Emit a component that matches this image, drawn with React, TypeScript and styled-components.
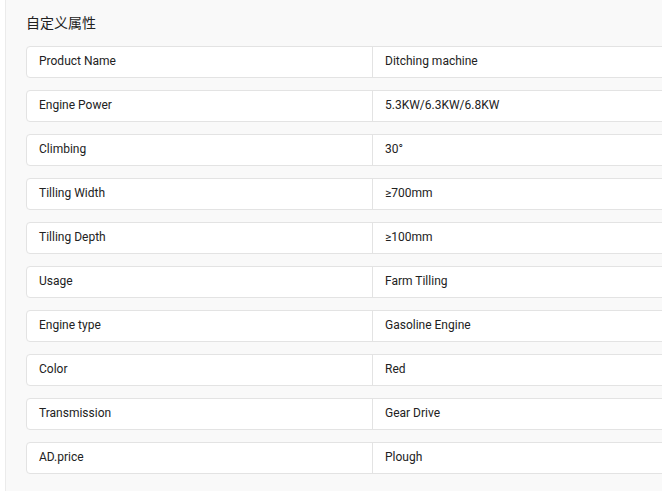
import React from "react";
import styled, { createGlobalStyle } from "styled-components";

const Global = createGlobalStyle`
  html, body { margin: 0; padding: 0; overflow: hidden; background: #fff; }
  body { font-family: Roboto, "Liberation Sans", Arial, "Noto Sans CJK SC", sans-serif; }
`;

const Page = styled.div`
  padding-left: 5px;
  background: #fff;
  height: 491px;
  display: flex;
  overflow: hidden;
`;

const Panel = styled.div`
  flex: 1;
  border-left: 1px solid #ebebeb;
  background: #f9f9f9;
  padding: 12px 0 0 20px;
  min-width: 0;
  overflow: hidden;
`;

const Title = styled.h3`
  margin: 0 0 14px;
  font-size: 14px;
  font-weight: 400;
  line-height: 20px;
  color: #222;
  font-family: "Noto Sans CJK SC", "Liberation Sans", sans-serif;
`;

const List = styled.div`
  display: flex;
  flex-direction: column;
  gap: 12px;
  width: 700px;
`;

const Row = styled.div`
  display: grid;
  grid-template-columns: 346px 1fr;
  height: 32px;
  box-sizing: border-box;
  border: 1px solid #e3e3e3;
  border-radius: 4px;
  background: #fff;
  font-size: 12px;
  color: #222;
`;

const Cell = styled.div<{ $divider?: boolean }>`
  display: flex;
  align-items: center;
  padding: 0 0 2px 12px;
  ${(p) => (p.$divider ? "border-right: 1px solid #e3e3e3;" : "")}
`;

const data: [string, string][] = [
  ["Product Name", "Ditching machine"],
  ["Engine Power", "5.3KW/6.3KW/6.8KW"],
  ["Climbing", "30°"],
  ["Tilling Width", "≥700mm"],
  ["Tilling Depth", "≥100mm"],
  ["Usage", "Farm Tilling"],
  ["Engine type", "Gasoline Engine"],
  ["Color", "Red"],
  ["Transmission", "Gear Drive"],
  ["AD.price", "Plough"],
];

export default function App() {
  return (
    <>
      <Global />
      <Page>
        <Panel>
          <Title>自定义属性</Title>
          <List>
            {data.map(([k, v]) => (
              <Row key={k}>
                <Cell $divider>{k}</Cell>
                <Cell>{v}</Cell>
              </Row>
            ))}
          </List>
        </Panel>
      </Page>
    </>
  );
}
